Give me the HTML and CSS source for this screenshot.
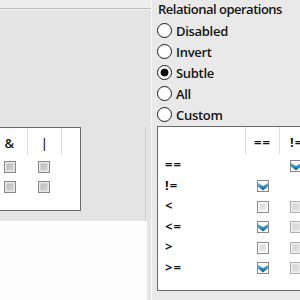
FILE: index.html
```html
<!DOCTYPE html>
<html lang="en">
<head>
    <meta charset="UTF-8">
    <title>Operations</title>
    <link rel="stylesheet" href="styles.css">
</head>
<body>
    <div class="left">
        <div class="left-top"></div>
        <div class="left-group">
            <div class="left-inner">
                <div class="ops-box">
                    <table class="ops">
                        <tr class="head"><th class="c1">&amp;</th><th class="c2">|</th><th class="c3"></th></tr>
                        <tr><td><span class="cb gray"></span></td><td><span class="cb gray"></span></td><td></td></tr>
                        <tr><td><span class="cb gray"></span></td><td><span class="cb gray"></span></td><td></td></tr>
                    </table>
                </div>
            </div>
        </div>
        <div class="left-bottom"></div>
    </div>

    <div class="right">
        <div class="title">Relational operations</div>
        <label class="radio"><span class="dot"></span>Disabled</label>
        <label class="radio"><span class="dot"></span>Invert</label>
        <label class="radio"><span class="dot on"></span>Subtle</label>
        <label class="radio"><span class="dot"></span>All</label>
        <label class="radio"><span class="dot"></span>Custom</label>

        <div class="rel-box">
            <table class="rel">
                <tr class="head"><th class="lbl"></th><th>==</th><th>!=</th></tr>
                <tr><td class="lbl">==</td><td></td><td><span class="cb on"></span></td></tr>
                <tr><td class="lbl">!=</td><td><span class="cb on"></span></td><td></td></tr>
                <tr><td class="lbl">&lt;</td><td><span class="cb"></span></td><td><span class="cb off"></span></td></tr>
                <tr><td class="lbl">&lt;=</td><td><span class="cb on"></span></td><td><span class="cb off"></span></td></tr>
                <tr><td class="lbl">&gt;</td><td><span class="cb"></span></td><td><span class="cb off"></span></td></tr>
                <tr><td class="lbl">&gt;=</td><td><span class="cb on"></span></td><td><span class="cb off"></span></td></tr>
            </table>
        </div>
    </div>
</body>
</html>
```

FILE: styles.css
```css
html {
    overflow: hidden;
}

body {
    margin: 0;
    width: 300px;
    height: 300px;
    overflow: hidden;
    display: flex;
    font-family: "Open Sans", "Noto Sans", sans-serif;
    color: #151515;
    background: #e4e4e4;
}

/* left side */
.left {
    width: 151px;
    flex-shrink: 0;
    display: flex;
    flex-direction: column;
    background: #e4e4e4;
}

.left-top {
    height: 8px;
    background: #ededed;
    border-bottom: 1px solid #bcbcbc;
}

.left-group {
    height: 211px;
    border-top: 1px solid #f3f3f3;
}

.left-inner {
    width: 145px;
    height: 100%;
    border-right: 1px solid #cfcfcf;
}

.ops-box {
    margin-top: 117px;
    margin-left: -9px;
    width: 88px;
    height: 82px;
    border: 1px solid #6b6b6b;
    background: #fff;
}

.left-bottom {
    flex: 1;
    margin-right: 4px;
    background: #fdfdfd;
}

/* tables */
table {
    border-collapse: collapse;
    border-spacing: 0;
    font-size: 13px;
    font-weight: 700;
}

th, td {
    padding: 0;
    text-align: center;
}

.head th {
    height: 24px;
    padding-top: 3px;
    font-weight: 700;
}

.head th + th {
    border-left: 1px solid #dcdcdc;
}

td {
    height: 20px;
}

.ops th {
    font-weight: 600;
}

.ops .c1 { width: 35px; }
.ops .c2 { width: 34px; }
.ops .c3 { width: 18px; }

/* right side */
.right {
    flex: 1;
    min-width: 0;
    overflow: hidden;
    background: #e9e9e9;
    border-left: 1px solid #f6f6f6;
    padding-left: 5px;
}

.title {
    height: 20px;
    line-height: 18px;
    font-size: 13px;
    font-weight: 600;
    letter-spacing: -0.5px;
    padding-left: 1px;
}

.radio {
    height: 21px;
    display: flex;
    align-items: center;
    gap: 4px;
    font-size: 13px;
    font-weight: 600;
    letter-spacing: -0.3px;
}

.dot {
    width: 15px;
    height: 15px;
    box-sizing: border-box;
    border: 1.6px solid #1a1a1a;
    border-radius: 50%;
    background: #fff;
}

.dot.on {
    background: radial-gradient(circle, #111 0, #111 3.6px, #fff 4.3px);
}

.rel-box {
    margin-top: 1px;
    width: 160px;
    height: 163px;
    border: 1px solid #6b6b6b;
    border-right: none;
    background: #fff;
}

.rel .lbl {
    width: 80px;
    text-align: left;
    padding-left: 7px;
    letter-spacing: 1px;
}

.rel th, .rel td {
    width: 33px;
}

.rel th {
    letter-spacing: 1px;
}

.rel td {
    height: 20.5px;
}

/* checkboxes */
.cb {
    display: inline-block;
    vertical-align: middle;
    width: 12px;
    height: 12px;
    box-sizing: border-box;
    border: 1px solid #8d8d8d;
    background: linear-gradient(135deg, #d4d4d4, #f2f2f2);
    box-shadow: inset 0 0 0 1.5px #fff;
}

.cb.gray {
    border-color: #888;
    background: linear-gradient(135deg, #b6b6b6, #dadada);
    box-shadow: inset 0 0 0 1.5px #e8e8e8;
}

.cb.off {
    border-color: #b0b0b0;
    background: linear-gradient(135deg, #cfcfcf, #e6e6e6);
    box-shadow: inset 0 0 0 1.5px #efefef;
}

.cb.on {
    border-color: #888;
    background: #fff url("data:image/svg+xml,%3Csvg xmlns='http://www.w3.org/2000/svg' width='10' height='10'%3E%3ClinearGradient id='g' x1='0' y1='0' x2='0' y2='1'%3E%3Cstop offset='0' stop-color='%2365bde8'/%3E%3Cstop offset='1' stop-color='%230f5687'/%3E%3C/linearGradient%3E%3Cpolygon points='0,2 5,5 10,2 10,5.5 5,9.5 0,5.5' fill='url(%23g)'/%3E%3C/svg%3E") center no-repeat;
    box-shadow: none;
}
```
